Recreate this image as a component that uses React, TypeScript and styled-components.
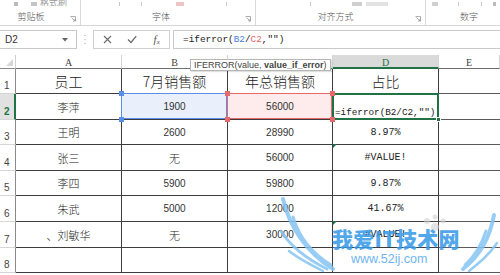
import React from 'react';
import styled, { createGlobalStyle, css } from 'styled-components';

const Global = createGlobalStyle`
  html, body { margin: 0; padding: 0; background: #fff; }
  body { width: 500px; height: 275px; overflow: hidden; font-family: "Liberation Sans", "Noto Sans CJK SC", sans-serif; }
  * { box-sizing: border-box; }
`;

const Page = styled.div`
  position: relative;
  width: 500px;
  height: 275px;
  overflow: hidden;
  background: #fff;
`;

/* ---------- Ribbon ---------- */
const Ribbon = styled.div`
  height: 26px;
  display: grid;
  grid-template-columns: 81px 175px 170px 1fr;
  border-bottom: 1px solid #d5d5d5;
  background: #fff;
`;

const Group = styled.div`
  display: flex;
  flex-direction: column;
  justify-content: space-between;
  border-right: 1px solid #d9d9d9;
  &:last-child { border-right: none; }
`;

const TopStrip = styled.div`
  height: 6px;
  overflow: hidden;
  display: flex;
  align-items: flex-end;
`;

const Frag = styled.span<{ $ml: number; $w?: number; $tone?: string }>`
  display: block;
  margin-left: ${p => p.$ml}px;
  width: ${p => (p.$w ? `${p.$w}px` : 'auto')};
  height: 4px;
  background: ${p => p.$tone || '#c8c8c8'};
  flex: none;
`;

const FragText = styled.span<{ $ml: number }>`
  display: block;
  margin-left: ${p => p.$ml}px;
  font-family: "Noto Sans CJK SC", sans-serif;
  font-size: 9px;
  line-height: 10px;
  margin-bottom: -2px;
  color: #999;
  flex: none;
`;

const GroupFoot = styled.div<{ $pr: number; $pl?: number; $align?: string }>`
  display: flex;
  align-items: center;
  height: 14px;
  margin-bottom: 1px;
  padding-left: ${p => p.$pl || 0}px;
  & > span:first-child {
    flex: 1;
    text-align: ${p => p.$align || 'center'};
    padding-right: ${p => p.$pr}px;
  }
`;

const GroupLabel = styled.span`
  font-family: "Noto Sans CJK SC", sans-serif;
  font-size: 9px;
  font-weight: 300;
  line-height: 12px;
  color: #555;
`;

const Launcher = styled.svg`
  width: 6px;
  height: 6px;
  margin-right: 4px;
  margin-top: 3px;
  flex: none;
`;

/* ---------- Formula bar ---------- */
const FormulaRow = styled.div`
  display: flex;
  height: 19px;
  margin-top: 4px;
`;

const NameBox = styled.div`
  width: 77px;
  border: 1px solid #c9c9c9;
  border-left: none;
  display: flex;
  align-items: center;
  justify-content: space-between;
  padding: 0 8px 0 5px;
  font-size: 10px;
  color: #333;
`;

const Grip = styled.div`
  width: 16px;
  display: flex;
  align-items: center;
  justify-content: center;
`;

const FxBox = styled.div`
  width: 77px;
  border: 1px solid #d0d0d0;
  display: flex;
  align-items: center;
  padding-left: 1px;
`;

const FxBtn = styled.div`
  width: 25px;
  display: flex;
  align-items: center;
  justify-content: center;
  color: #666;
`;

const FxText = styled.span`
  font-family: "Liberation Serif", serif;
  font-style: italic;
  font-size: 11px;
  color: #555;
  & > sub { font-size: 7px; vertical-align: -1px; }
`;

const FormulaInput = styled.div`
  flex: 1;
  margin-left: 3px;
  border: 1px solid #c9c9c9;
  border-right: none;
  display: flex;
  align-items: center;
  padding-left: 9px;
  font-family: "Liberation Mono", monospace;
  font-size: 9.4px;
  color: #222;
  white-space: pre;
`;

const Ref = styled.span<{ $c: string }>`
  color: ${p => p.$c};
`;

/* ---------- Sheet ---------- */
const Sheet = styled.div`
  position: relative;
  margin-top: 6px;
  display: grid;
  grid-template-columns: 16px 106px 106px 105px 106px 61px;
  grid-template-rows: 14px 25px 26px 25px 26px 25px 26px 26px 25px;
`;

const Corner = styled.div`
  border-right: 1px solid #d0d0d0;
  border-bottom: 1px solid #8a8a8a;
  display: flex;
  align-items: flex-end;
  justify-content: flex-end;
  padding: 0 2px 2px 0;
`;

const ColHead = styled.div<{ $sel?: boolean }>`
  border-right: 1px solid #d4d4d4;
  border-bottom: ${p => (p.$sel ? '2px solid #217346' : '1px solid #6e6e6e')};
  background: ${p => (p.$sel ? '#dadada' : '#fff')};
  color: ${p => (p.$sel ? '#217346' : '#444')};
  font-family: "Liberation Serif", serif;
  font-size: 10px;
  display: flex;
  align-items: center;
  justify-content: center;
  padding-top: 2px;
`;

const RowHead = styled.div<{ $sel?: boolean }>`
  border-bottom: 1px solid #d6d6d6;
  border-right: ${p => (p.$sel ? '2px solid #217346' : '1px solid #8a8a8a')};
  background: ${p => (p.$sel ? '#e1e1e1' : '#fff')};
  color: ${p => (p.$sel ? '#217346' : '#444')};
  font-weight: ${p => (p.$sel ? 700 : 400)};
  font-family: "Liberation Sans", sans-serif;
  font-size: 10px;
  display: flex;
  align-items: flex-end;
  padding: 0 0 2px 4px;
`;

type Kind = 'head' | 'cjk' | 'num' | 'mono' | 'formula';

const kindStyle: Record<Kind, ReturnType<typeof css>> = {
  head: css`font-family: "Noto Sans CJK SC", sans-serif; font-weight: 300; font-size: 14px; color: #222;`,
  cjk: css`font-family: "Noto Sans CJK SC", sans-serif; font-weight: 300; font-size: 11px; color: #222;`,
  num: css`font-family: "Liberation Sans", sans-serif; font-size: 10px; color: #333;`,
  mono: css`font-family: "Liberation Mono", monospace; font-size: 10px; color: #222;`,
  formula: css`
    font-family: "Liberation Mono", monospace;
    font-size: 9.3px;
    color: #222;
    justify-content: flex-start;
    align-items: flex-end;
    padding: 0 0 1px 2px;
  `,
};

const Cell = styled.div<{ $kind: Kind; $fill?: string }>`
  position: relative;
  border-right: 1px solid #3d3d3d;
  border-bottom: 1px solid #3d3d3d;
  background: ${p => p.$fill || '#fff'};
  display: flex;
  align-items: center;
  justify-content: center;
  white-space: pre;
  ${p => kindStyle[p.$kind]}
`;

const ECell = styled.div`
  border-bottom: 1px solid #5a5a5a;
`;

const Frame = styled.span<{ $c: string; $w: number }>`
  position: absolute;
  top: -1px;
  left: -1px;
  right: ${p => (p.$w === 2 ? -1 : 0)}px;
  bottom: ${p => (p.$w === 2 ? -1 : 0)}px;
  border: ${p => p.$w}px solid ${p => p.$c};
  pointer-events: none;
  z-index: 2;
`;

const Handle = styled.span<{ $c: string; $pos: string }>`
  position: absolute;
  width: 5px;
  height: 5px;
  background: ${p => p.$c};
  ${p => p.$pos}
  z-index: 3;
`;

const FillHandle = styled.span`
  position: absolute;
  right: -3px;
  bottom: -3px;
  width: 5px;
  height: 5px;
  background: #217346;
  border: 1px solid #fff;
  z-index: 4;
`;

const ErrMark = styled.span`
  position: absolute;
  top: -1px;
  left: 0;
  width: 0;
  height: 0;
  border-top: 4px solid #1e7145;
  border-right: 4px solid transparent;
  z-index: 2;
`;

const Tip = styled.div`
  position: absolute;
  top: 4px;
  left: 190px;
  height: 12px;
  padding: 0 3px;
  background: #fff;
  border: 1px solid #b5b5b5;
  box-shadow: 1px 1px 1px rgba(0, 0, 0, 0.12);
  font-family: "Liberation Sans", sans-serif;
  font-size: 9px;
  line-height: 10px;
  color: #444;
  white-space: nowrap;
  z-index: 5;
  & > b { font-weight: 700; }
`;

/* ---------- Watermark ---------- */
const Watermark = styled.div`
  position: absolute;
  left: 275px;
  top: 195px;
  width: 225px;
  height: 80px;
  pointer-events: none;
  z-index: 10;
`;

const WingSvg = styled.svg`
  position: absolute;
  inset: 0;
`;

const WmTitle = styled.div`
  position: absolute;
  left: 57px;
  top: 30px;
  font-family: "Noto Sans CJK SC", sans-serif;
  font-weight: 900;
  font-size: 21px;
  line-height: 26px;
  letter-spacing: 0.3px;
  color: #3b9be8;
  opacity: 0.88;
  white-space: nowrap;
`;

const WmUrl = styled.div`
  position: absolute;
  left: 76px;
  top: 57px;
  font-family: "Liberation Sans", sans-serif;
  font-size: 12.5px;
  line-height: 14px;
  color: #5eaef0;
  opacity: 0.9;
  white-space: nowrap;
`;

const rows: string[][] = [
  ['员工', '7月销售额', '年总销售额', '占比'],
  ['李萍', '1900', '56000', '=iferror(B2/C2,"")'],
  ['王明', '2600', '28990', '8.97%'],
  ['张三', '无', '56000', '#VALUE!'],
  ['李四', '5900', '59800', '9.87%'],
  ['朱武', '5000', '12000', '41.67%'],
  ['、刘敏华', '无', '30000', '#VALUE!'],
  ['', '', '', ''],
];

const kindFor = (r: number, c: number, v: string): Kind => {
  if (r === 0) return 'head';
  if (c === 0) return 'cjk';
  if (c === 3) return r === 1 ? 'formula' : 'mono';
  return /^\d+$/.test(v) ? 'num' : 'cjk';
};

const corners = [
  'top:-3px;left:-3px;',
  'top:-3px;right:-3px;',
  'bottom:-3px;left:-3px;',
  'bottom:-3px;right:-3px;',
];

const LaunchIcon = () => (
  <Launcher viewBox="0 0 6 6">
    <path d="M0.5 0.5 H5.5 V5.5" fill="none" stroke="#999" strokeWidth="0.8" />
    <path d="M1.5 1.5 L5 5 M3 5 H5 V3" fill="none" stroke="#999" strokeWidth="0.8" />
  </Launcher>
);

export default function App() {
  return (
    <Page>
      <Global />
      <Ribbon>
        <Group>
          <TopStrip>
            <Frag $ml={14} $w={4} $tone="#bbb" />
            <Frag $ml={13} $w={6} $tone="#c4c4c4" />
            <FragText $ml={3}>格式刷</FragText>
          </TopStrip>
          <GroupFoot $pr={8}>
            <GroupLabel>剪贴板</GroupLabel>
            <LaunchIcon />
          </GroupFoot>
        </Group>
        <Group>
          <TopStrip>
            <Frag $ml={38} $w={1} />
            <Frag $ml={21} $w={1} />
            <Frag $ml={34} $w={8} $tone="#ecc4c4" />
            <Frag $ml={42} $w={1} />
          </TopStrip>
          <GroupFoot $pr={4}>
            <GroupLabel>字体</GroupLabel>
            <LaunchIcon />
          </GroupFoot>
        </Group>
        <Group>
          <TopStrip>
            <Frag $ml={54} $w={1} />
            <Frag $ml={41} $w={10} $tone="#cfcfcf" />
            <Frag $ml={4} $w={22} $tone="#e2e2e2" />
          </TopStrip>
          <GroupFoot $pr={0}>
            <GroupLabel>对齐方式</GroupLabel>
            <LaunchIcon />
          </GroupFoot>
        </Group>
        <Group>
          <TopStrip>
            <Frag $ml={6} $w={6} $tone="#d0d0d0" />
            <Frag $ml={20} $w={1} />
            <Frag $ml={22} $w={1} />
            <Frag $ml={11} $w={3} $tone="#bbb" />
          </TopStrip>
          <GroupFoot $pr={0} $pl={34} $align="left">
            <GroupLabel>数字</GroupLabel>
          </GroupFoot>
        </Group>
      </Ribbon>

      <FormulaRow>
        <NameBox>
          <span>D2</span>
          <svg width="6" height="4" viewBox="0 0 6 4">
            <path d="M0 0 H6 L3 3.5 Z" fill="#666" />
          </svg>
        </NameBox>
        <Grip>
          <svg width="2" height="9" viewBox="0 0 2 9">
            <rect x="0.5" y="0" width="1" height="1" fill="#aaa" />
            <rect x="0.5" y="4" width="1" height="1" fill="#aaa" />
            <rect x="0.5" y="8" width="1" height="1" fill="#aaa" />
          </svg>
        </Grip>
        <FxBox>
          <FxBtn>
            <svg width="9" height="9" viewBox="0 0 9 9">
              <path d="M1 1 L8 8 M8 1 L1 8" stroke="#6a6a6a" strokeWidth="1.1" />
            </svg>
          </FxBtn>
          <FxBtn>
            <svg width="10" height="9" viewBox="0 0 10 9">
              <path d="M1 4.5 L4 7.5 L9.2 1.2" fill="none" stroke="#6a6a6a" strokeWidth="1.3" />
            </svg>
          </FxBtn>
          <FxBtn>
            <FxText>f<sub>x</sub></FxText>
          </FxBtn>
        </FxBox>
        <FormulaInput>
          =iferror(<Ref $c="#4a7fd6">B2</Ref>/<Ref $c="#e06666">C2</Ref>,"")
        </FormulaInput>
      </FormulaRow>

      <Sheet>
        <Corner>
          <svg width="7" height="7" viewBox="0 0 7 7">
            <path d="M7 0 V7 H0 Z" fill="#d6d6d6" />
          </svg>
        </Corner>
        {['A', 'B', 'C', 'D', 'E'].map(l => (
          <ColHead key={l} $sel={l === 'D'}>{l}</ColHead>
        ))}
        {rows.map((row, r) => (
          <React.Fragment key={r}>
            <RowHead $sel={r === 1}>{r + 1}</RowHead>
            {row.map((v, c) => {
              const blue = r === 1 && c === 1;
              const red = r === 1 && c === 2;
              const active = r === 1 && c === 3;
              const err = c === 3 && v === '#VALUE!';
              return (
                <Cell
                  key={c}
                  $kind={kindFor(r, c, v)}
                  $fill={blue ? '#eaf0fb' : red ? '#fdeceb' : undefined}
                >
                  {v}
                  {blue && (
                    <>
                      <Frame $c="#5b8ee6" $w={1} />
                      {corners.map(p => <Handle key={p} $c="#5b8ee6" $pos={p} />)}
                    </>
                  )}
                  {red && (
                    <>
                      <Frame $c="#e8696b" $w={1} />
                      {corners.map(p => <Handle key={p} $c="#e8696b" $pos={p} />)}
                    </>
                  )}
                  {active && (
                    <>
                      <Frame $c="#217346" $w={2} />
                      <FillHandle />
                    </>
                  )}
                  {err && <ErrMark />}
                </Cell>
              );
            })}
            <ECell />
          </React.Fragment>
        ))}
        <Tip>
          IFERROR(value, <b>value_if_error</b>)
        </Tip>
      </Sheet>

      <Watermark>
        <WingSvg width="225" height="80" viewBox="0 0 225 80">
          <g fill="none" stroke="#86c5f3" strokeLinecap="round" opacity="0.85">
            <path d="M8 4 C14 30 30 56 58 74" strokeWidth="4" />
            <path d="M18 22 C24 42 36 58 56 70" strokeWidth="3" />
            <path d="M6 36 C16 52 32 64 52 74" strokeWidth="3" />
            <path d="M14 56 C24 64 36 70 48 76" strokeWidth="2.5" />
            <path d="M219 20 C215 42 206 60 188 74" strokeWidth="4" />
            <path d="M211 36 C206 52 199 62 190 70" strokeWidth="3" />
            <path d="M222 48 C214 60 204 68 194 76" strokeWidth="2.5" />
          </g>
          <g fill="#d2d2d2" opacity="0.6">
            <circle cx="152" cy="26" r="3" />
            <circle cx="160" cy="22" r="2.5" />
            <circle cx="168" cy="26" r="2.5" />
            <circle cx="160" cy="32" r="4" />
          </g>
        </WingSvg>
        <WmTitle>我爱IT技术网</WmTitle>
        <WmUrl>www.52ij.com</WmUrl>
      </Watermark>
    </Page>
  );
}
